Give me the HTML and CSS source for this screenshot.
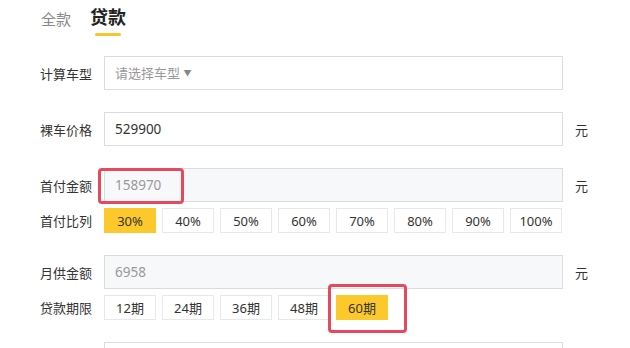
FILE: index.html
```html
<!DOCTYPE html>
<html lang="zh-CN">
<head>
    <meta charset="UTF-8">
    <title>购车计算器</title>
    <link rel="stylesheet" href="styles.css">
</head>
<body>
<div class="calc">
    <div class="tabs">
        <span class="tab">全款</span>
        <span class="tab active">贷款</span>
    </div>

    <div class="row">
        <label class="label">计算车型</label>
        <div class="input select">请选择车型 <span class="arrow">▼</span></div>
    </div>

    <div class="row">
        <label class="label">裸车价格</label>
        <div class="input">529900</div>
        <span class="unit">元</span>
    </div>

    <div class="row">
        <label class="label">首付金额</label>
        <div class="input readonly">
            158970
            <span class="mark mark-pay"></span>
        </div>
        <span class="unit">元</span>
    </div>
    <div class="options">
        <label class="label">首付比列</label>
        <div class="btns">
            <button class="opt on">30%</button>
            <button class="opt">40%</button>
            <button class="opt">50%</button>
            <button class="opt">60%</button>
            <button class="opt">70%</button>
            <button class="opt">80%</button>
            <button class="opt">90%</button>
            <button class="opt">100%</button>
        </div>
    </div>

    <div class="row">
        <label class="label">月供金额</label>
        <div class="input readonly">6958</div>
        <span class="unit">元</span>
    </div>
    <div class="options">
        <label class="label">贷款期限</label>
        <div class="btns">
            <button class="opt">12期</button>
            <button class="opt">24期</button>
            <button class="opt">36期</button>
            <button class="opt">48期</button>
            <button class="opt on">60期<span class="mark mark-term"></span></button>
        </div>
    </div>

    <div class="row">
        <label class="label"></label>
        <div class="input"></div>
    </div>
</div>
</body>
</html>
```

FILE: styles.css
```css
body {
    margin: 0;
    background: #fff;
    font-family: "Noto Sans", "Noto Sans CJK SC", sans-serif;
    color: #333;
    overflow: hidden;
}
.calc {
    padding-left: 40px;
}
.tabs {
    display: flex;
    align-items: flex-start;
    gap: 19px;
    height: 37px;
    padding-left: 1px;
}
.tab {
    font-size: 15px;
    color: #888;
    line-height: 20px;
    padding-top: 9px;
}
.tab.active {
    position: relative;
    font-size: 18px;
    font-weight: bold;
    color: #222;
    padding-top: 5px;
    line-height: 24px;
}
.tab.active::after {
    content: "";
    position: absolute;
    left: 5px;
    right: 5px;
    top: 33px;
    height: 3px;
    background: #f6c42d;
    border-radius: 2px;
}
.row {
    display: flex;
    align-items: center;
    margin-top: 22px;
}
.tabs + .row {
    margin-top: 19px;
}
.label {
    width: 64px;
    flex-shrink: 0;
    font-size: 13px;
    color: #333;
}
.input {
    position: relative;
    box-sizing: border-box;
    width: 459px;
    height: 34px;
    line-height: 32px;
    padding-left: 10px;
    border: 1px solid #dcdcdc;
    font-size: 13.5px;
    color: #333;
    background: #fff;
}
.select {
    color: #999;
    font-size: 13px;
}
.arrow {
    font-size: 8px;
    vertical-align: 2px;
    color: #888;
}
.readonly {
    background: #f7f8fa;
    color: #999;
}
.unit {
    margin-left: 12px;
    font-size: 13px;
}
.options {
    display: flex;
    align-items: center;
    margin-top: 6px;
}
.btns {
    display: flex;
    gap: 6px;
}
.opt {
    position: relative;
    box-sizing: border-box;
    width: 52px;
    height: 25px;
    padding: 0;
    border: 1px solid #e8e8e8;
    background: #fff;
    font-family: inherit;
    font-size: 13px;
    color: #333;
}
.opt.on {
    background: #fcc82c;
    border-color: #fcc82c;
}
.mark {
    position: absolute;
    border: 3px solid #e8485e;
    border-radius: 4px;
    box-sizing: border-box;
}
.mark-pay {
    left: -7px;
    top: -1px;
    width: 86px;
    height: 36px;
}
.mark-term {
    left: -9px;
    top: -12px;
    width: 79px;
    height: 49px;
}
```
